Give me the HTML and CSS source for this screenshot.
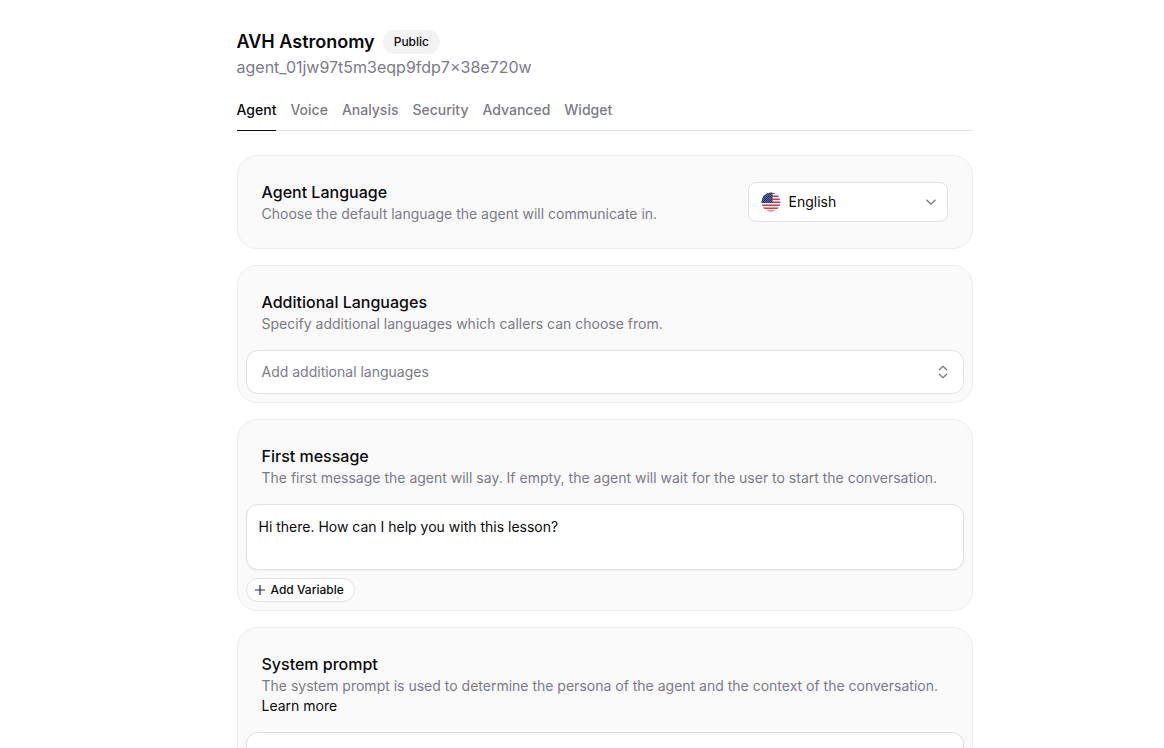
FILE: index.html
```html
<!DOCTYPE html>
<html lang="en">
<head>
  <meta charset="UTF-8">
  <meta name="viewport" content="width=device-width, initial-scale=1.0">
  <title>AVH Astronomy</title>
  <link rel="stylesheet" href="styles.css">
</head>
<body>
  <div class="page">
    <main class="content">
      <header class="agent-header">
        <div class="agent-title">
          <h1>AVH Astronomy</h1>
          <span class="badge">Public</span>
        </div>
        <p class="agent-id">agent_01jw97t5m3eqp9fdp7x38e720w</p>
      </header>

      <nav class="tabs">
        <a class="tab active" href="#agent">Agent</a>
        <a class="tab" href="#voice">Voice</a>
        <a class="tab" href="#analysis">Analysis</a>
        <a class="tab" href="#security">Security</a>
        <a class="tab" href="#advanced">Advanced</a>
        <a class="tab" href="#widget">Widget</a>
      </nav>

      <div class="cards">
        <section class="card card-row">
          <div class="card-header">
            <h2><label for="language">Agent Language</label></h2>
            <p>Choose the default language the agent will communicate in.</p>
          </div>
          <div class="select-box">
            <svg class="flag" viewBox="0 0 20 20" aria-hidden="true">
              <defs>
                <clipPath id="flagClip"><circle cx="10" cy="10" r="9.5"/></clipPath>
                <pattern id="stars" width="2" height="2" patternUnits="userSpaceOnUse">
                  <circle cx="0.6" cy="0.6" r="0.4" fill="#c5cbe0"/>
                  <circle cx="1.6" cy="1.6" r="0.4" fill="#c5cbe0"/>
                </pattern>
              </defs>
              <g clip-path="url(#flagClip)">
                <rect width="20" height="20" fill="#f5f0f1"/>
                <path d="M0 1.2h20M0 4.2h20M0 7.2h20M0 10.2h20M0 13.2h20M0 16.2h20M0 19.2h20" stroke="#c8404a" stroke-width="1.5"/>
                <rect width="11.5" height="11" fill="#1f3470"/>
                <rect width="11.5" height="11" fill="url(#stars)"/>
              </g>
            </svg>
            <select id="language">
              <option>English</option>
            </select>
            <svg class="icon chevron" viewBox="0 0 16 16" aria-hidden="true">
              <path d="M3.5 5.7 8 10.2 12.5 5.7"/>
            </svg>
          </div>
        </section>

        <section class="card">
          <div class="card-header">
            <h2>Additional Languages</h2>
            <p>Specify additional languages which callers can choose from.</p>
          </div>
          <button class="field combobox" type="button">
            <span>Add additional languages</span>
            <svg class="icon" viewBox="0 0 16 16" aria-hidden="true">
              <path d="M4 6 8 2.3 12 6M4 10l4 3.7L12 10"/>
            </svg>
          </button>
        </section>

        <section class="card">
          <div class="card-header">
            <h2><label for="firstMessage">First message</label></h2>
            <p>The first message the agent will say. If empty, the agent will wait for the user to start the conversation.</p>
          </div>
          <textarea class="field message" id="firstMessage">Hi there. How can I help you with this lesson?</textarea>
          <button class="variable-button" type="button">
            <svg class="plus" viewBox="0 0 12 12" aria-hidden="true">
              <path d="M6 1v10M1 6h10"/>
            </svg>
            Add Variable
          </button>
        </section>

        <section class="card">
          <div class="card-header">
            <h2><label for="systemPrompt">System prompt</label></h2>
            <p>The system prompt is used to determine the persona of the agent and the context of the conversation. <a href="#learn">Learn more</a></p>
          </div>
          <textarea class="field prompt" id="systemPrompt"></textarea>
        </section>
      </div>
    </main>
  </div>
</body>
</html>
```
FILE: styles.css
```css
* {
  box-sizing: border-box;
}

body {
  margin: 0;
  font-family: Inter, sans-serif;
  font-size: 14px;
  line-height: 20px;
  color: #0a0a0b;
  background: #fff;
}

h1,
h2,
p {
  margin: 0;
}

a {
  color: inherit;
  text-decoration: none;
}

button,
select,
textarea {
  font: inherit;
  color: inherit;
}

/* scrolls without a visible scrollbar */
.page {
  height: 100vh;
  overflow-y: auto;
  scrollbar-width: none;
  padding-left: 45px;
}

.content {
  max-width: 768px;
  margin: 0 auto;
  padding: 28px 16px;
}

.agent-title {
  display: flex;
  align-items: center;
  gap: 8px;
}

.agent-title h1 {
  font-size: 18px;
  line-height: 28px;
  font-weight: 600;
}

.badge {
  padding: 2px 11px;
  border-radius: 12px;
  background: #f3f3f4;
  font-size: 12px;
  font-weight: 500;
}

.agent-id {
  font-size: 16px;
  line-height: 22px;
  color: #7b7b85;
}

.tabs {
  display: flex;
  gap: 14px;
  margin-top: 22px;
  border-bottom: 1px solid #e4e4e6;
}

.tab {
  margin-bottom: -1px;
  padding-bottom: 10px;
  border-bottom: 1px solid transparent;
  font-weight: 500;
  color: #7b7b85;
}

.tab.active {
  color: #0a0a0b;
  border-color: #0a0a0b;
}

.cards {
  display: flex;
  flex-direction: column;
  gap: 16px;
  margin-top: 24px;
}

.card {
  padding: 24px 8px 8px;
  border: 1px solid #eeeeef;
  border-radius: 20px;
  background: #fafafa;
}

.card-row {
  display: flex;
  align-items: center;
  justify-content: space-between;
  padding: 24px 24px 24px 8px;
}

.card-header {
  padding: 0 16px;
}

.card-header h2 {
  font-size: 16px;
  line-height: 24px;
  font-weight: 500;
}

.card-header p {
  color: #7b7b85;
}

.card-header p a {
  display: block;
  color: #0a0a0b;
}

.select-box {
  position: relative;
  width: 200px;
}

.select-box select {
  display: block;
  width: 100%;
  height: 40px;
  padding: 0 36px 0 40px;
  border: 1px solid #e2e2e5;
  border-radius: 8px;
  background: #fff;
  appearance: none;
}

.flag {
  position: absolute;
  top: 10px;
  left: 13px;
  width: 20px;
  height: 20px;
}

.icon {
  width: 16px;
  height: 16px;
  fill: none;
  stroke: #77777f;
  stroke-width: 1.3;
}

.chevron {
  position: absolute;
  top: 12px;
  right: 9px;
  pointer-events: none;
}

.field {
  display: block;
  width: 100%;
  margin-top: 16px;
  border: 1px solid #e2e2e5;
  border-radius: 12px;
  background: #fff;
}

.combobox {
  display: flex;
  align-items: center;
  justify-content: space-between;
  height: 44px;
  padding: 0 12px 0 15px;
  color: #7b7b85;
}

.message,
.prompt {
  height: 66px;
  padding: 12px;
  box-shadow: 0 1px 2px rgba(0, 0, 0, 0.06);
  resize: none;
}

.prompt {
  height: 240px;
}

.variable-button {
  display: flex;
  align-items: center;
  gap: 5px;
  height: 24px;
  margin-top: 8px;
  padding: 0 10px 0 7px;
  border: 1px solid #e2e2e5;
  border-radius: 12px;
  background: #fff;
  font-size: 12px;
  font-weight: 500;
}

.plus {
  width: 12px;
  height: 12px;
  fill: none;
  stroke: #2a2a2d;
  stroke-width: 1.2;
}
```
